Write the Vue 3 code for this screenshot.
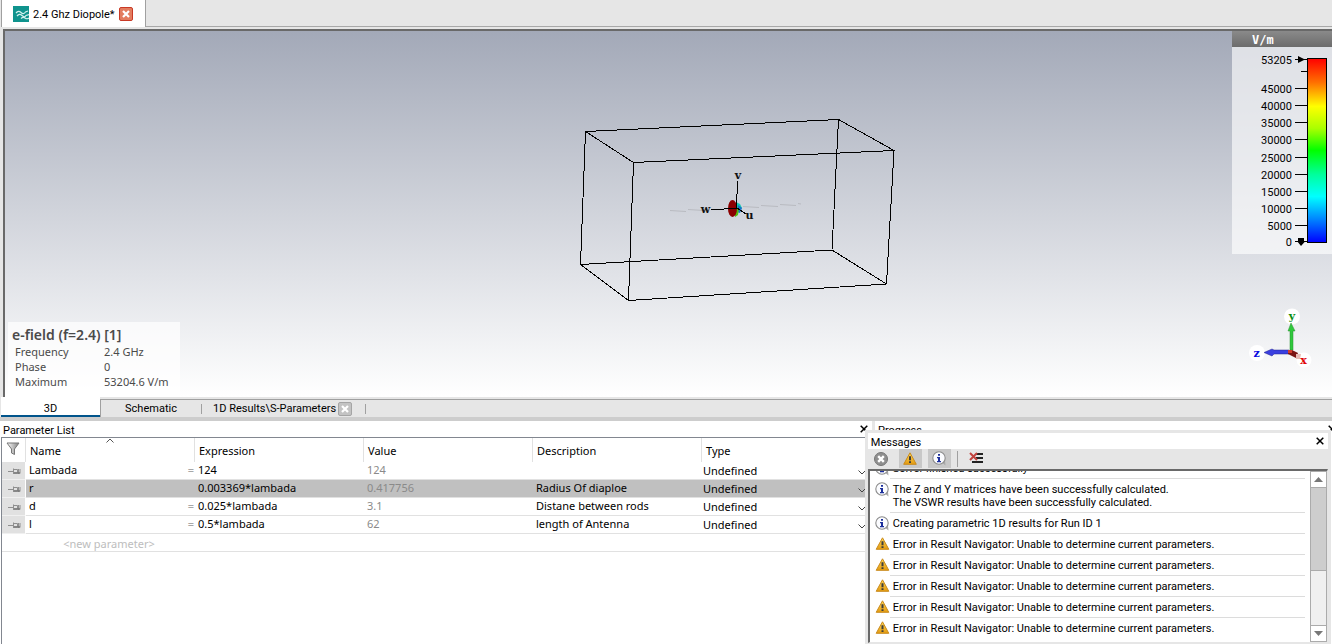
<script setup>
import { ref } from 'vue'

const ticks = [
  { y: 60, label: '53205' },
  { y: 71, label: '' },
  { y: 88, label: '45000' },
  { y: 105, label: '40000' },
  { y: 122, label: '35000' },
  { y: 139, label: '30000' },
  { y: 157, label: '25000' },
  { y: 174, label: '20000' },
  { y: 191, label: '15000' },
  { y: 208, label: '10000' },
  { y: 225, label: '5000' },
  { y: 241, label: '0' }
]

const facts = [
  ['Frequency', '2.4 GHz'],
  ['Phase', '0'],
  ['Maximum', '53204.6 V/m']
]

const selected = ref('r')
const newParameter = ref('')
const parameters = ref([
  { name: 'Lambada', expression: '124', value: '124', description: '', type: 'Undefined' },
  { name: 'r', expression: '0.003369*lambada', value: '0.417756', description: 'Radius Of diaploe', type: 'Undefined' },
  { name: 'd', expression: '0.025*lambada', value: '3.1', description: 'Distane between rods', type: 'Undefined' },
  { name: 'l', expression: '0.5*lambada', value: '62', description: 'length of Antenna', type: 'Undefined' }
])

const navError = 'Error in Result Navigator: Unable to determine current parameters.'
const messages = [
  { kind: 'info', lines: ['Solver finished successfully'] },
  { kind: 'info', lines: ['The Z and Y matrices have been successfully calculated.', 'The VSWR results have been successfully calculated.'] },
  { kind: 'info', lines: ['Creating parametric 1D results for Run ID 1'] },
  ...Array.from({ length: 5 }, () => ({ kind: 'warn', lines: [navError] }))
]
</script>

<template>
  <div class="app">
    <svg class="defs" width="0" height="0" aria-hidden="true">
      <defs>
        <linearGradient id="amber" x1="0" y1="0" x2="0" y2="1">
          <stop offset="0" stop-color="#ffd95a" />
          <stop offset="1" stop-color="#e39a10" />
        </linearGradient>
        <linearGradient id="funnel" x1="0" y1="0" x2="1" y2="0">
          <stop offset="0" stop-color="#ffffff" />
          <stop offset="1" stop-color="#808080" />
        </linearGradient>
        <symbol id="info" viewBox="0 0 15 15">
          <path d="M10.5 12 L13.5 14.5 L13 10 Z" fill="#a8a8a8" />
          <circle cx="7" cy="7" r="6.2" fill="#fbfcff" stroke="#8c8c8c" stroke-width="1.1" />
          <path d="M6 3h2v1.8H6z M5 6h3v4h1v1.2H5V10h1V7.2H5z" fill="#1c2f9c" />
        </symbol>
        <symbol id="warn" viewBox="0 0 14 13">
          <path d="M7 .8 L13.3 12.3 H.7 Z" fill="url(#amber)" stroke="#c98a1c" stroke-width="1" stroke-linejoin="round" />
          <path d="M6 4.2h2v4H6z M6 9.3h2v1.8H6z" fill="#3c3c3c" />
        </symbol>
        <symbol id="cross" viewBox="0 0 8 8">
          <path d="M.7 .7 L7.3 7.3 M7.3 .7 L.7 7.3" stroke="#000" stroke-width="1.5" fill="none" />
        </symbol>
      </defs>
    </svg>

    <header class="doc-tabs">
      <div class="doc-tab">
        <svg width="16" height="16" viewBox="0 0 16 16" aria-hidden="true">
          <rect width="16" height="16" fill="#0f938d" />
          <path d="M3 7 Q5.500 4 8 6.500 T12.500 6 L15 5 M4 10 Q6.500 7 9 9.500 T13 9.500 L16 8.500 M8 12.500 Q10 10.500 12 12 T16 12" fill="none" stroke="#d4f0ee" stroke-width="1.200" />
        </svg>
        <span>2.4 Ghz Diopole*</span>
        <button class="tab-close hot" type="button" aria-label="Close document">
          <svg width="8" height="8" viewBox="0 0 8 8"><path d="M1 1 L7 7 M7 1 L1 7" stroke="#fff" stroke-width="2.200" /></svg>
        </button>
      </div>
      <div class="doc-rest"></div>
    </header>

    <main class="viewport">
      <svg class="scene" viewBox="5 31 1327 366" aria-label="3D view">
        <g class="wire">
          <path d="M585.500 131.500 L838.500 119.500 L894 150.500 L633.500 162.500 Z" />
          <path d="M580.500 264.500 L832 250 L886.500 284 L628.500 300.500 Z" />
          <path d="M585.500 131.500 L580.500 264.500 M838.500 119.500 L832 250 M894 150.500 L886.500 284 M633.500 162.500 L628.500 300.500" />
        </g>
        <path d="M670 210.500 L686 211.500 M688 209.500 L704 210.500 M743 206.500 L759 207.500 M761 205.500 L778 206.500 M780 204.500 L796 205.500 M798 203.500 L801 204" stroke="#b9bbc1" fill="none" />
        <path d="M736 202 l4 2 l2 4 l-4 3 z" fill="#16c8b0" />
        <path d="M738 205 l4 3 l-2 5 l-3 -1 z" fill="#1572c8" />
        <path d="M735 207 l4 1 l-1 7 l-3 2 z" fill="#4fbf10" />
        <ellipse cx="732.500" cy="208.500" rx="4.500" ry="8.500" fill="#8b0000" />
        <path class="wire" d="M737.500 181 L736.500 208 M711 209.500 L737 208.500 M737 208 L746 214" />
        <g class="axis" fill="#111">
          <text x="738" y="179">v</text>
          <text x="705.500" y="213">w</text>
          <text x="749.500" y="219">u</text>
        </g>
      </svg>

      <aside class="legend" aria-label="Colour scale">
        <h2>V/m</h2>
        <svg width="100" height="207" viewBox="1232 47 100 207">
          <defs>
            <linearGradient id="ramp" x1="0" y1="0" x2="0" y2="1">
              <stop offset="0" stop-color="#ff0000" />
              <stop offset="0.130" stop-color="#ff7000" />
              <stop offset="0.260" stop-color="#ffff00" />
              <stop offset="0.380" stop-color="#aaff00" />
              <stop offset="0.500" stop-color="#00ff00" />
              <stop offset="0.630" stop-color="#00ff9c" />
              <stop offset="0.750" stop-color="#00ffff" />
              <stop offset="0.870" stop-color="#0088ff" />
              <stop offset="1" stop-color="#0000ff" />
            </linearGradient>
          </defs>
          <g v-for="t in ticks" :key="t.y">
            <rect :x="t.label ? 1295 : 1301" :y="t.y - (t.y === 60 ? 1 : 0)" :width="t.label ? 12 : 6" height="1" />
            <text x="1292" :y="t.y + (t.y === 60 ? 4 : 5)">{{ t.label }}</text>
          </g>
          <path d="M1298 56 L1305 59.500 L1298 63 Z M1298 238 h6 v3 h1.500 L1301 246 L1297 241 h1 Z" />
          <rect x="1307.500" y="58.500" width="19" height="184" fill="url(#ramp)" stroke="#000" />
        </svg>
      </aside>

      <svg class="triad" width="68" height="62" viewBox="1246 306 68 62" aria-label="Axes">
        <g fill="#fff"><circle cx="1292" cy="316.500" r="8" /><circle cx="1257" cy="353" r="8" /><circle cx="1304" cy="360" r="7.500" /></g>
        <path d="M1290 350 V331 h-2 L1291 323 L1295 331 h-2 V350 Z" fill="#2fc93c" stroke="#2b8f33" stroke-width=".5" />
        <path d="M1289 350 H1274 L1272 349 L1264 352.500 L1272 356 L1274 354 H1289 Z" fill="#3a3fe0" stroke="#22258f" stroke-width=".5" />
        <path d="M1288 350 h4 l6 3 l-2 5 l-8 -4 z" fill="#7a1414" />
        <rect x="1288" y="350" width="4" height="3" fill="#d23b2c" />
        <path d="M1296 354 l5 0 l-1 5 l-4 0 z" fill="#e8bcb8" />
        <g class="axis">
          <text x="1292" y="320" fill="#0a8f14">y</text>
          <text x="1256.500" y="357" fill="#0a0ae0">z</text>
          <text x="1303.500" y="364" fill="#e00808">x</text>
        </g>
      </svg>

      <section class="facts">
        <h2>e-field (f=2.4) [1]</h2>
        <dl>
          <template v-for="f in facts" :key="f[0]">
            <dt>{{ f[0] }}</dt>
            <dd>{{ f[1] }}</dd>
          </template>
        </dl>
      </section>
    </main>

    <nav class="view-tabs">
      <button class="view-tab active" type="button">3D</button>
      <div class="view-rest">
        <button class="view-tab schematic" type="button">Schematic</button>
        <span class="view-sep"></span>
        <button class="view-tab results" type="button">1D Results\S-Parameters</button>
        <button class="tab-close" type="button" aria-label="Close 1D results">
          <svg width="8" height="8" viewBox="0 0 8 8"><path d="M1 1 L7 7 M7 1 L1 7" stroke="#fff" stroke-width="2.200" /></svg>
        </button>
        <span class="view-sep last"></span>
      </div>
    </nav>

    <section class="dock">
      <section class="pane">
        <header class="pane-title">
          <h2>Parameter List</h2>
          <button class="plain" type="button" aria-label="Close parameter list"><svg width="8" height="8"><use href="#cross" /></svg></button>
        </header>
        <div class="grid-wrap">
          <table class="params">
            <colgroup>
              <col class="c-pin" /><col class="c-text" /><col class="c-text" /><col class="c-text" /><col class="c-text" /><col />
            </colgroup>
            <thead>
              <tr>
                <th>
                  <button class="plain filter" type="button" aria-label="Filter">
                    <svg width="14" height="14" viewBox="0 0 14 14"><path d="M1 1 H13 L8.500 7 V12.500 L5.500 11 V7 Z" fill="url(#funnel)" stroke="#777" /></svg>
                  </button>
                </th>
                <th>
                  Name
                  <svg class="sort" width="8" height="5" viewBox="0 0 8 5" aria-hidden="true"><path d="M.5 4.500 L4 1 L7.500 4.500" fill="none" stroke="#555" /></svg>
                </th>
                <th>Expression</th>
                <th>Value</th>
                <th>Description</th>
                <th>Type</th>
              </tr>
            </thead>
            <tbody>
              <tr v-for="p in parameters" :key="p.name" :class="{ selected: p.name === selected }" @click="selected = p.name">
                <td class="pin">
                  <svg width="13" height="8" viewBox="0 0 13 8" aria-hidden="true">
                    <path d="M0 4.500 H5 M5.500 1.500 V7 M6 2.500 H9.500 V6 H6 M10.500 2 V7 M12 2 V6.500" fill="none" stroke="#8f8f8f" />
                    <path d="M6 6 H12" stroke="#777" stroke-width="1.500" />
                  </svg>
                </td>
                <td><div class="name">{{ p.name }}<span v-if="p.name !== selected" class="eq">=</span></div></td>
                <td>{{ p.expression }}</td>
                <td class="muted">{{ p.value }}</td>
                <td>{{ p.description }}</td>
                <td class="type">
                  <div class="pick">
                    <select v-model="p.type" :aria-label="'Type of ' + p.name"><option>Undefined</option></select>
                    <svg width="8" height="5" viewBox="0 0 8 5" aria-hidden="true"><path d="M.5 .5 L4 4 L7.500 .5" fill="none" stroke="#444" /></svg>
                  </div>
                </td>
              </tr>
              <tr class="fresh">
                <td></td>
                <td><input v-model="newParameter" type="text" placeholder="<new parameter>" aria-label="New parameter" /></td>
                <td></td><td></td><td></td><td></td>
              </tr>
            </tbody>
          </table>
        </div>
      </section>

      <section class="pane progress">
        <header class="pane-title">
          <h2>Progress</h2>
          <button class="plain" type="button" aria-label="Close progress"><svg width="8" height="8"><use href="#cross" /></svg></button>
        </header>
      </section>

      <section class="messages">
        <header class="pane-title">
          <h2>Messages</h2>
          <button class="plain" type="button" aria-label="Close messages"><svg width="8" height="8"><use href="#cross" /></svg></button>
        </header>
        <div class="tools">
          <button class="tool" type="button" aria-label="Errors">
            <svg width="14" height="14" viewBox="0 0 14 14"><circle cx="7" cy="7" r="6.500" fill="#8f8f8f" stroke="#777" /><path d="M4.200 4.200 L9.800 9.800 M9.800 4.200 L4.200 9.800" stroke="#fff" stroke-width="2.400" /></svg>
          </button>
          <button class="tool on" type="button" aria-label="Warnings"><svg width="14" height="13"><use href="#warn" /></svg></button>
          <button class="tool on" type="button" aria-label="Information"><svg width="15" height="15"><use href="#info" /></svg></button>
          <span class="tool-sep"></span>
          <button class="tool clear" type="button" aria-label="Clear messages">
            <svg width="15" height="12" viewBox="0 0 15 12"><path d="M7 2 H14 M7 6 H14 M3 10 H14" stroke="#222" stroke-width="2" /><path d="M1 1 L8 8 M8 1 L1 8" stroke="#c2433f" stroke-width="2" /></svg>
          </button>
        </div>
        <div class="log">
          <ul>
            <li v-for="(m, i) in messages" :key="i">
              <svg v-if="m.kind === 'info'" width="15" height="15" aria-hidden="true"><use href="#info" /></svg>
              <svg v-else width="14" height="13" aria-hidden="true"><use href="#warn" /></svg>
              <div class="body"><p v-for="line in m.lines" :key="line">{{ line }}</p></div>
            </li>
          </ul>
          <div class="scroll">
            <button type="button" aria-label="Scroll up"><svg width="9" height="5" viewBox="0 0 9 5"><path d="M0 5 L4.500 0 L9 5 Z" fill="#777" /></svg></button>
            <div class="track"><div class="thumb"></div></div>
            <button type="button" aria-label="Scroll down"><svg width="9" height="5" viewBox="0 0 9 5"><path d="M0 0 L4.500 5 L9 0 Z" fill="#777" /></svg></button>
          </div>
        </div>
      </section>
    </section>
  </div>
</template>

<style>
html, body { margin: 0; background: #e6e6e6; }
</style>

<style scoped>
.app {
  display: flex;
  flex-direction: column;
  height: 100vh;
  min-height: 480px;
  overflow: hidden;
  background: #e6e6e6;
  color: #000;
  font: 11px/13px Roboto, "Liberation Sans", sans-serif;
}
.app *, .app *::before { box-sizing: border-box; }
.defs { position: absolute; }
svg { display: block; flex: none; }
h2, p, ul, dl, dd { margin: 0; padding: 0; }
h2 { font-size: 11px; font-weight: 400; }
ul { list-style: none; }
button { padding: 0; border: 0; background: none; color: inherit; font: inherit; }

.doc-tabs { display: flex; height: 29px; padding-left: 1px; }
.doc-tab {
  display: flex;
  align-items: center;
  gap: 4px;
  height: 27px;
  padding: 1px 12px 0 11px;
  border: solid #a0a0a0;
  border-width: 0 1px 0 1px;
  background: #fff;
}
.doc-rest { flex: 1; height: 27px; border-bottom: 1px solid #a8a8a8; }
.tab-close {
  display: grid;
  place-items: center;
  width: 14px;
  height: 14px;
  border: 1px solid #a5a5a5;
  border-radius: 2px;
  background: #c3c3c3;
}
.tab-close.hot { border-color: #c93a26; background: #e37c5f; }

.viewport {
  position: relative;
  flex: 1;
  min-height: 0;
  margin-left: 3px;
  border: solid #696969;
  border-width: 2px 0 0 2px;
  background: linear-gradient(#a3a9b8, #fff);
}
.scene { width: 100%; height: 100%; }
.wire { fill: none; stroke: #000; shape-rendering: crispEdges; }
.axis { font: bold 11px "DejaVu Serif", serif; text-anchor: middle; }

.legend { position: absolute; top: 0; right: 0; width: 100px; background: rgba(255, 255, 255, 0.63); }
.legend h2 {
  height: 16px;
  padding-left: 20px;
  background: linear-gradient(#8a8a8a, #6c6c6c);
  color: #fff;
  font: bold 12px/18px "DejaVu Sans Mono", monospace;
}
.legend text { text-anchor: end; }
.triad { position: absolute; right: 18px; bottom: 29px; }

.facts {
  position: absolute;
  left: 3px;
  bottom: 0;
  width: 172px;
  height: 75px;
  padding: 5px 4px 0;
  background: rgba(255, 255, 255, 0.7);
  color: #4a4a4a;
  font: 11px/15px "Noto Sans", sans-serif;
}
.facts h2 { font: 600 14px/16px "Noto Sans", sans-serif; }
.facts dl { display: grid; grid-template-columns: 89px 1fr; padding: 1px 0 0 3px; }

.view-tabs { display: flex; height: 20px; padding-left: 1px; }
.view-tab { height: 18px; }
.view-tab.active { width: 99px; height: 20px; padding-top: 5px; border-bottom: 2px solid #00548b; background: #fff; }
.view-rest {
  display: flex;
  flex: 1;
  align-items: center;
  margin-top: 2px;
  border: solid #a0a0a0;
  border-width: 1px 0 0 1px;
}
.schematic { width: 100px; }
.view-sep { width: 1px; height: 10px; background: #a0a0a0; }
.results { margin: 0 2px 0 11px; }
.view-sep.last { margin-left: 13px; }

.dock {
  position: relative;
  display: grid;
  grid-template-columns: 872fr 457fr;
  column-gap: 3px;
  height: 227px;
  border-top: 4px solid #cdcdcd;
}
.pane { display: flex; flex-direction: column; min-width: 0; background: #fff; }
.pane-title {
  display: flex;
  align-items: center;
  justify-content: space-between;
  height: 16px;
  padding: 2px 4px 0 3px;
  background: #fff;
}
.plain { display: grid; place-items: center; }
.pane-title .plain { height: 12px; padding-bottom: 3px; }
.progress { margin-right: -8px; }
.grid-wrap { flex: 1; margin-left: 1px; border: solid #828790; border-width: 1px 0 0 1px; }

.params { width: 100%; table-layout: fixed; border-collapse: separate; border-spacing: 0; font: 11px/15px "Noto Sans", sans-serif; }
.c-pin { width: 24px; }
.c-text { width: 169px; }
.params th { position: relative; height: 24px; padding: 0 0 0 4px; border-right: 1px solid #e1e1e1; font-weight: 400; text-align: left; }
.params th:last-child { border-right: 0; }
.sort { position: absolute; top: 0; left: 80px; }
.filter { margin-top: -2px; }
.params td { height: 18px; padding: 0 0 2px 3px; border-bottom: 1px solid #e1e1e1; white-space: nowrap; }
.params .pin { padding: 0 0 0 6px; border-right: 1px solid #fff; border-bottom-color: #f0f0f0; background: #e1e1e1; }
.selected td:not(.pin) { background: #c0c0c0; }
.name { display: flex; justify-content: space-between; padding-right: 1px; }
.eq, .muted { color: #8a8a8a; }
.eq { color: #a8a8a8; }
.params .type { padding: 0 0 0 1px; }
.pick { display: flex; align-items: center; height: 17px; padding-right: 6px; }
.pick select { flex: 1; min-width: 0; height: 16px; padding: 0; border: 0; appearance: none; background: transparent; color: inherit; font: inherit; }
.pick svg { margin: 4px 0 0; }
.params .fresh td { padding: 0 3px 0 0; }
.fresh input { display: block; width: 100%; height: 17px; padding: 2px 0 0; border: 0; background: transparent; font: inherit; text-align: center; }
.fresh input::placeholder { color: #bdbdbd; opacity: 1; }

.messages {
  position: absolute;
  top: 9px;
  right: 1px;
  bottom: 0;
  display: flex;
  flex-direction: column;
  width: 35%;
  padding: 3px 3px 1px;
  background: #e6e6e6;
}
.messages .pane-title { flex: none; }
.tools { display: flex; flex: none; gap: 6px; height: 20px; padding-left: 2px; }
.tool { display: grid; place-items: center; width: 23px; height: 19px; }
.tool.on { background: #c8c8c8; }
.tool.clear { width: 25px; padding-bottom: 2px; }
.tool-sep { width: 1px; height: 16px; margin: 2px 0 0; background: #a0a0a0; }
.log { display: flex; flex: 1; min-height: 0; border: solid #696969; border-width: 2px 1px 1px 2px; border-right-color: #e6e6e6; border-bottom-color: #e6e6e6; background: #fff; }
.log ul { display: flex; flex: 1; flex-direction: column; justify-content: flex-end; overflow: hidden; padding: 0 5px 3px; }
.log li { display: flex; flex: none; align-items: flex-start; }
.log li > svg { width: 15px; margin-top: 3px; }
.body { flex: 1; padding: 4px 0 3px 3px; border-bottom: 1px solid #dcdcdc; }
.log li:last-child .body { border-bottom-color: transparent; }
.scroll { display: flex; flex-direction: column; width: 17px; background: #cdcdcd; }
.scroll button { display: grid; flex: none; place-items: center; height: 17px; border: 1px solid #ababab; background: #fff; }
.track { display: flex; flex: 1; flex-direction: column; justify-content: flex-end; border: solid #ababab; border-width: 0 1px; }
.thumb { height: 40%; border-top: 1px solid #ababab; background: #f0f0f0; }
</style>
